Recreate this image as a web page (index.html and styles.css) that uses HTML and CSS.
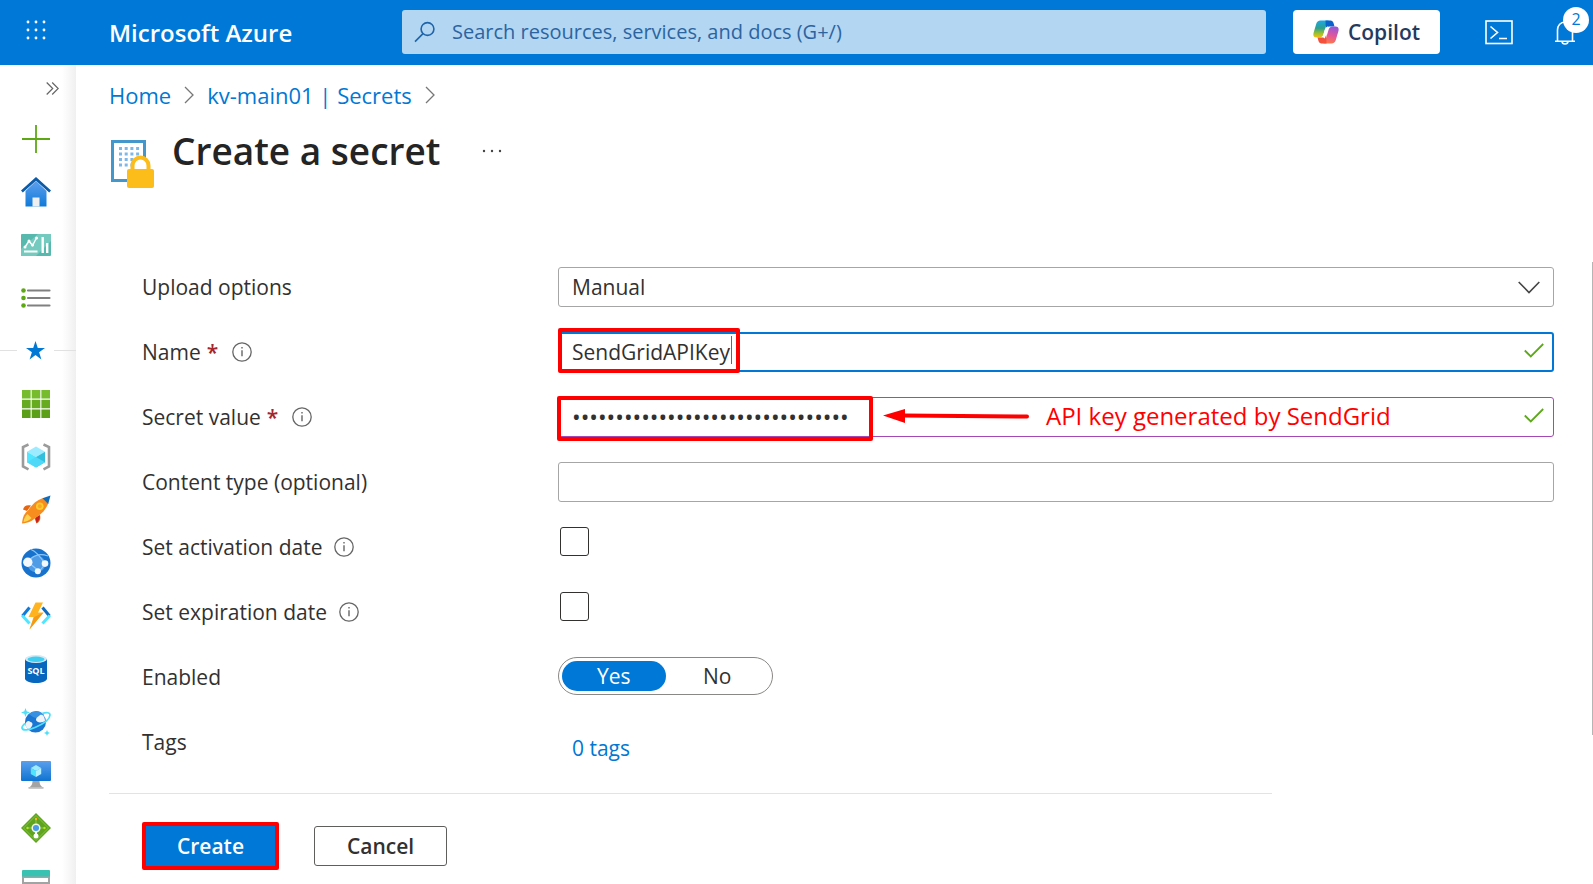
FILE: index.html
```html
<!DOCTYPE html>
<html lang="en">
<head>
  <meta charset="UTF-8">
  <meta name="viewport" content="width=device-width, initial-scale=1">
  <title>Create a secret - Microsoft Azure</title>
  <link rel="stylesheet" href="styles.css">
</head>
<body>
  <header class="topbar">
    <button class="waffle" aria-label="Portal menu">
      <svg width="20" height="20" viewBox="0 0 20 20" fill="#fff">
        <circle cx="2" cy="2" r="1.4"/><circle cx="10" cy="2" r="1.4"/><circle cx="18" cy="2" r="1.4"/>
        <circle cx="2" cy="10" r="1.4"/><circle cx="10" cy="10" r="1.4"/><circle cx="18" cy="10" r="1.4"/>
        <circle cx="2" cy="18" r="1.4"/><circle cx="10" cy="18" r="1.4"/><circle cx="18" cy="18" r="1.4"/>
      </svg>
    </button>
    <a class="brand" href="#">Microsoft Azure</a>
    <div class="search">
      <svg width="22" height="22" viewBox="0 0 22 22" fill="none" stroke="#1f64a8" stroke-width="1.6">
        <circle cx="13.5" cy="8" r="6.4"/><path d="M9 12.6L1 20.6"/>
      </svg>
      <input type="text" aria-label="Search" placeholder="Search resources, services, and docs (G+/)">
    </div>
    <button class="copilot">
      <svg width="26" height="24" viewBox="0 0 26 24">
        <defs>
          <linearGradient id="cpA" x1="0" y1="0" x2="0" y2="1">
            <stop offset="0" stop-color="#1aa7e8"/><stop offset=".45" stop-color="#2fa08c"/><stop offset=".75" stop-color="#9cc02c"/><stop offset="1" stop-color="#fbbf12"/>
          </linearGradient>
          <linearGradient id="cpB" x1=".5" y1="0" x2=".3" y2="1">
            <stop offset="0" stop-color="#9358d8"/><stop offset=".5" stop-color="#e0569b"/><stop offset="1" stop-color="#ff7a45"/>
          </linearGradient>
        </defs>
        <path d="M7.500 .5H16c-1.500.6-2 2-2.500 3.500L10.500 14c-.6 2.200-1.800 3.600-4 3.600H3.500C.8 17.600-.2 15.500.6 12.800L3.200 4C3.800 2 5.300.5 7.500.5z" fill="url(#cpA)"/>
        <path d="M12.500 .5h5c1.600 0 2.500 1 3 2.500l1 3.500h-5c-2 0-3 1-3.700 3z" fill="#0b62cc"/>
        <path d="M18.500 23.500H10c1.500-.6 2-2 2.500-3.500l3-10c.6-2.200 1.800-3.600 4-3.600h3c2.700 0 3.700 2.100 2.900 4.800L22.800 20c-.6 2-2.100 3.500-4.300 3.500z" fill="url(#cpB)"/>
        <path d="M13.500 23.500h-5c-1.600 0-2.500-1-3-2.500l-1-3.400h5c2 0 3-1 3.700-3z" fill="#f4513d"/>
        <path d="M15.300 7.500c-1.300.4-1.900 1.500-2.200 2.500l-1.800 6c-.2.700-.4 1.200-.7 1.600" fill="none" stroke="#fff" stroke-width="2.600"/>
      </svg>
      <span>Copilot</span>
    </button>
    <button class="shell" aria-label="Cloud Shell">
      <svg width="28" height="25" viewBox="0 0 28 25" fill="none" stroke="#fff" stroke-width="1.600">
        <rect x="1" y="1" width="26" height="22.500"/><path d="M5.500 6.500l7 6-7 6M14 18.500h8"/>
      </svg>
    </button>
    <button class="bell" aria-label="Notifications">
      <svg width="22" height="26" viewBox="0 0 22 26" fill="none" stroke="#fff" stroke-width="1.600">
        <path d="M1 21.200h20M3.500 21V10c0-4.500 3.200-8 7.500-8s7.500 3.500 7.500 8v11M8 21.500c.3 3.300 5.700 3.300 6 0"/>
      </svg>
      <span class="badge">2</span>
    </button>
  </header>

  <div class="layout">
    <nav class="sidebar" aria-label="Favorites">
      <button class="expand" aria-label="Expand menu">
        <svg width="13" height="13" viewBox="0 0 13 13" fill="none" stroke="#666" stroke-width="1.200"><path d="M.7.5l6 6-6 6M6.200.5l6 6-6 6"/></svg>
      </button>
      <a href="#" aria-label="Create a resource">
        <svg width="30" height="30" viewBox="0 0 30 30" stroke="#5ea816" stroke-width="1.800"><path d="M1 15h28M15 1v28"/></svg>
      </a>
      <a href="#" aria-label="Home">
        <svg width="30" height="30" viewBox="0 0 30 30">
          <defs><linearGradient id="hm" x1="0" y1="0" x2="0" y2="1"><stop offset="0" stop-color="#5ea0ef"/><stop offset="1" stop-color="#0f7ad8"/></linearGradient></defs>
          <path d="M4.500 14L15 4l10.500 10v15.500h-21z" fill="url(#hm)"/>
          <rect x="11.500" y="20.500" width="7" height="9" fill="#efefef"/>
          <path d="M15 0l15 13.500-1.800 2L15 3.800 1.800 15.500 0 13.500z" fill="#0b5ba8"/>
        </svg>
      </a>
      <a href="#" aria-label="Dashboard">
        <svg width="30" height="22" viewBox="0 0 30 22">
          <rect width="30" height="22" rx="1" fill="#57b9ae"/><path d="M0 15L17 0h12a1 1 0 0 1 1 1v6L15 22H0z" fill="#74cabf"/>
          <path d="M4 13l4-6 3.500 4.500L15.500 4" fill="none" stroke="#fff" stroke-width="1.400"/>
          <g fill="#fff"><circle cx="4" cy="13" r="1.500"/><circle cx="8" cy="7" r="1.500"/><circle cx="11.500" cy="11" r="1.500"/><circle cx="15.500" cy="4" r="1.500"/>
          <rect x="20.500" y="3" width="2.400" height="16"/><rect x="25" y="9" width="2.400" height="10"/><rect x="3" y="16.500" width="13.500" height="2"/></g>
        </svg>
      </a>
      <a href="#" aria-label="All services">
        <svg width="30" height="20" viewBox="0 0 30 20">
          <g fill="#5ea816"><circle cx="2.500" cy="2.500" r="2.300"/><circle cx="2.500" cy="10" r="2.300"/><circle cx="2.500" cy="17.500" r="2.300"/></g>
          <path d="M7 2.500h21.500M7 10h21.500M7 17.500h21.500" stroke="#808080" stroke-width="2.200" stroke-linecap="round"/>
        </svg>
      </a>
      <div class="favorites">
        <svg width="19" height="19" viewBox="0 0 19 19"><path d="M9.500 0l2.300 7H19l-5.900 4.300 2.300 7.200-5.900-4.400-5.900 4.400 2.300-7.200L0 7h7.200z" fill="#0078d4"/></svg>
      </div>
      <a href="#" aria-label="All resources">
        <svg width="28" height="28" viewBox="0 0 28 28">
          <path d="M0 0h8.600v8.600H0zM9.700 0h8.600v8.600H9.700zM19.400 0H28v8.600h-8.600z" fill="#76bc2d"/>
          <path d="M0 9.700h8.600v8.600H0zM9.700 9.700h8.600v8.600H9.700zM19.400 9.700H28v8.600h-8.600z" fill="#67ab20"/>
          <path d="M0 19.400h8.600V28H0zM9.700 19.400h8.600V28H9.700zM19.400 19.400H28V28h-8.600z" fill="#5a9f17"/>
        </svg>
      </a>
      <a href="#" aria-label="Resource groups">
        <svg width="30" height="28" viewBox="0 0 30 28">
          <path d="M7.500 1.500L2 4v19.500l5.500 2.800M22.500 1.500L28 4v19.500l-5.500 2.800" fill="none" stroke="#9b9b9b" stroke-width="2.600"/>
          <path d="M15 3.500l9 5.200L15 14 6 8.700z" fill="#9cebff"/><path d="M6 8.700L15 14v10.500l-9-5.300z" fill="#50e6ff"/><path d="M24 8.700L15 14v10.500l9-5.300z" fill="#32bedd"/><path d="M6 19.200L15 14l9 5.200-9 5.300z" fill="#50d8f8"/>
        </svg>
      </a>
      <a href="#" aria-label="Quickstart Center">
        <svg width="30" height="30" viewBox="0 0 30 30">
          <path d="M10 10.500c-4-1-7 0-8 4l4 1.500zM19 20c1 4 0 6.500-3.500 8.500l-2-5z" fill="#e8650d"/>
          <path d="M14.500 22.500l4-2.500c1 3-1 6.500-3 8z" fill="#c3201f"/>
          <path d="M8 15c-4.500 2.500-6.500 7-7 13.500C7.500 28 12 26 14.500 22z" fill="#f78d1e"/>
          <path d="M6.500 19c-2.500 2-3.500 5-4 8 3-.4 6-1.500 8-4z" fill="#ffd34e"/>
          <path d="M22 3c-7 2.500-12 7-16 14.500l6.500 6.500C20 20 25 14.500 27.500 8z" fill="#f78d1e"/>
          <path d="M29.500.5L21.500 3.300l5.700 5.600z" fill="#0f6cbd"/>
          <circle cx="18.800" cy="11.300" r="3.800" fill="#ffca2c"/><circle cx="18.800" cy="11.300" r="2" fill="#f9a825"/>
        </svg>
      </a>
      <a href="#" aria-label="App Services">
        <svg width="30" height="30" viewBox="0 0 30 30">
          <circle cx="15" cy="15" r="14.500" fill="#1672cc"/>
          <ellipse cx="15.500" cy="16" rx="9" ry="8.500" fill="#4e9be6"/>
          <path d="M10 1.500C14 3 19 8 24 16M7 14C12 7 19 5 27 8M7 14l12 10M24 16l-6 8" fill="none" stroke="#8fc6fa" stroke-width="1.200"/>
          <g fill="#f3f8fd"><circle cx="6.800" cy="14.300" r="4.700"/><circle cx="24" cy="15.600" r="3.300"/><circle cx="16.800" cy="23.200" r="3"/></g>
        </svg>
      </a>
      <a href="#" aria-label="Function App">
        <svg width="30" height="28" viewBox="0 0 30 28">
          <path d="M8.500 5.500L1.500 14" fill="none" stroke="#0f7ad8" stroke-width="3"/><path d="M1.200 13.500l7.300 8" fill="none" stroke="#50e6ff" stroke-width="3"/>
          <path d="M21.500 5.500l7 8.500" fill="none" stroke="#0f6cbd" stroke-width="3"/><path d="M28.800 13.500l-7.300 8" fill="none" stroke="#50e6ff" stroke-width="3"/>
          <path d="M14.500.5h7.500L17 10.500h5.500L8.500 27.500l4-12.500H7.500z" fill="#ffb41f"/><path d="M13.200 15l9.300-4.500L8.500 27.500z" fill="#f59a16"/>
        </svg>
      </a>
      <a href="#" aria-label="SQL databases">
        <svg width="22" height="28" viewBox="0 0 22 28">
          <path d="M0 4v19.500C0 26 5 28 11 28s11-2 11-4.500V4z" fill="#0766bd"/>
          <ellipse cx="11" cy="4" rx="11" ry="4" fill="#d5e8f4"/><ellipse cx="11" cy="4.300" rx="8.500" ry="2.700" fill="#3fcdf0"/>
          <text class="sql-text" x="11" y="19">SQL</text>
        </svg>
      </a>
      <a href="#" aria-label="Azure Cosmos DB">
        <svg width="30" height="28" viewBox="0 0 30 28">
          <circle cx="14.500" cy="14" r="10.500" fill="#1a76d2"/><path d="M8 6a10 10 0 0 1 15 1c-4 3-9 5-15-1z" fill="#3790e2"/>
          <path d="M4.500 16c1-3 3-4 5-2 2 .4 2.500 2 1.500 4l-3 4c-2-1-3.500-3.500-3.500-6zM15 12c0-3 3-3.500 4-5 3-1.500 5 2 5 6-2 1.500-8 2.500-9-1z" fill="#f0f4f8"/>
          <path d="M21 5.500c5-1.500 8-1 8 1.500 0 4-7 9-15 12.500C8 22 1.500 23 1 20c-.2-1 .8-2.700 3-4.700" fill="none" stroke="#50dff8" stroke-width="1.700"/>
          <path d="M4.500 0l1.200 3.300L9 4.500 5.700 5.700 4.500 9 3.300 5.700 0 4.500l3.300-1.200zM26 22l.9 2.100L29 25l-2.100.9L26 28l-.9-2.100L23 25l2.100-.9z" fill="#50dff8"/>
        </svg>
      </a>
      <a href="#" aria-label="Virtual machines">
        <svg width="30" height="28" viewBox="0 0 30 28">
          <defs><linearGradient id="vm" x1="0" y1="1" x2="0" y2="0"><stop offset="0" stop-color="#0f74d2"/><stop offset="1" stop-color="#5a9fec"/></linearGradient></defs>
          <rect width="30" height="20" rx="1" fill="url(#vm)"/><path d="M11.500 20h7c0 3.500 1 5 4 6.800H7.500c3-1.800 4-3.300 4-6.800z" fill="#a3a3a3"/><rect x="7.500" y="26" width="15" height="1.800" fill="#bdbdbd"/>
          <path d="M15 4l5.200 3L15 10 9.800 7z" fill="#9cebff"/><path d="M9.800 7L15 10v6l-5.200-3z" fill="#50e6ff"/><path d="M20.200 7L15 10v6l5.200-3z" fill="#b5f1ff"/>
        </svg>
      </a>
      <a href="#" aria-label="Load balancers">
        <svg width="30" height="30" viewBox="0 0 30 30">
          <path d="M15 0l15 15-15 15L0 15z" fill="#5fa321"/><path d="M15 2.500L27.500 15 15 27.500 2.500 15z" fill="none" stroke="#82c43c" stroke-width="1"/>
          <path d="M15 6v6M6 15h6M18 15h6" stroke="#86c543" stroke-width="1.200"/><path d="M15 18v5" stroke="#fff" stroke-width="2"/>
          <circle cx="15" cy="15" r="3.800" fill="#4a9bea" stroke="#eef7e4" stroke-width="1.500"/><circle cx="15" cy="23" r="2.500" fill="#fff"/>
          <circle cx="15" cy="6" r="1.200" fill="#ffb41f"/><circle cx="6.500" cy="15" r="1.200" fill="#b4e51f"/><circle cx="23.500" cy="15" r="1.200" fill="#b4e51f"/>
        </svg>
      </a>
      <a href="#" aria-label="Storage accounts">
        <svg width="28" height="22" viewBox="0 0 28 22">
          <path d="M0 6h28v15a1 1 0 0 1-1 1H1a1 1 0 0 1-1-1z" fill="#a3a3a3"/><path d="M0 1a1 1 0 0 1 1-1h26a1 1 0 0 1 1 1v5.500H0z" fill="#37c2b1"/><rect x="2" y="8" width="24" height="4" fill="#fff"/>
          <rect x="2" y="14" width="24" height="4" fill="#fff"/>
        </svg>
      </a>
    </nav>

    <main class="blade">
      <nav class="breadcrumb" aria-label="Breadcrumb">
        <a href="#">Home</a>
        <svg width="10" height="18" viewBox="0 0 10 18" fill="none" stroke="#777" stroke-width="1.300"><path d="M1 1l8 8-8 8"/></svg>
        <a href="#">kv-main01 | Secrets</a>
        <svg width="10" height="18" viewBox="0 0 10 18" fill="none" stroke="#777" stroke-width="1.300"><path d="M1 1l8 8-8 8"/></svg>
      </nav>

      <div class="title-row">
        <svg class="title-icon" width="43" height="48" viewBox="0 0 43 48">
          <rect x="1.500" y="1.500" width="32" height="39" fill="#fff" stroke="#4597cb" stroke-width="3"/>
          <path d="M8 8.500h21M8 14h21M8 19.500h21M8 25h14" stroke="#7db9e8" stroke-width="3" stroke-dasharray="3 2.700"/>
          <path d="M21.500 31v-5.500a8 8 0 0 1 16 0V31" fill="#fff" stroke="#fcbc19" stroke-width="4"/>
          <rect x="16" y="29" width="27" height="19" rx="2" fill="#fcbc19"/>
        </svg>
        <h1>Create a secret</h1>
        <button class="more" aria-label="More">
          <svg width="20" height="4" viewBox="0 0 20 4" fill="#444"><circle cx="2" cy="2" r="1.200"/><circle cx="10" cy="2" r="1.200"/><circle cx="18" cy="2" r="1.200"/></svg>
        </button>
      </div>

      <form class="secret-form">
        <div class="row">
          <label for="upload">Upload options</label>
          <div class="field">
            <select id="upload"><option>Manual</option></select>
            <svg class="field-icon chevron" width="22" height="13" viewBox="0 0 22 13" fill="none" stroke="#444" stroke-width="1.600"><path d="M.7 1L11 11.500 21.300 1"/></svg>
          </div>
        </div>

        <div class="row">
          <label for="name">Name <span class="required">*</span> <svg class="info" width="20" height="20" viewBox="0 0 20 20"><circle cx="10" cy="10" r="9.200" fill="none" stroke="#666" stroke-width="1.300"/><path d="M10 8.300v6M10 5v1.500" stroke="#666" stroke-width="1.400"/></svg></label>
          <div class="field">
            <input class="focused" type="text" id="name" value="SendGridAPIKey">
            <span class="highlight highlight-name"><span class="caret"></span></span>
            <svg class="field-icon" width="20" height="15" viewBox="0 0 20 15" fill="none" stroke="#5ea81c" stroke-width="1.800"><path d="M.8 7.500l6 6L19.200 1"/></svg>
          </div>
        </div>

        <div class="row">
          <label for="secret">Secret value <span class="required">*</span> <svg class="info" width="20" height="20" viewBox="0 0 20 20"><circle cx="10" cy="10" r="9.200" fill="none" stroke="#666" stroke-width="1.300"/><path d="M10 8.300v6M10 5v1.500" stroke="#666" stroke-width="1.400"/></svg></label>
          <div class="field">
            <input class="changed" type="password" id="secret" value="SG.0123456789abcdefghijklmnopqrs">
            <span class="highlight highlight-secret"></span>
            <div class="note">
              <svg width="146" height="14" viewBox="0 0 146 14"><path d="M0 6.500L22 0v14z" fill="#f00"/><path d="M20 6.500L144 7.500" stroke="#f00" stroke-width="4" stroke-linecap="round"/></svg>
              <span>API key generated by SendGrid</span>
            </div>
            <svg class="field-icon" width="20" height="15" viewBox="0 0 20 15" fill="none" stroke="#5ea81c" stroke-width="1.800"><path d="M.8 7.500l6 6L19.200 1"/></svg>
          </div>
        </div>

        <div class="row">
          <label for="content-type">Content type (optional)</label>
          <div class="field"><input type="text" id="content-type"></div>
        </div>

        <div class="row">
          <label for="activation">Set activation date <svg class="info" width="20" height="20" viewBox="0 0 20 20"><circle cx="10" cy="10" r="9.200" fill="none" stroke="#666" stroke-width="1.300"/><path d="M10 8.300v6M10 5v1.500" stroke="#666" stroke-width="1.400"/></svg></label>
          <div class="field"><input type="checkbox" id="activation"></div>
        </div>

        <div class="row">
          <label for="expiration">Set expiration date <svg class="info" width="20" height="20" viewBox="0 0 20 20"><circle cx="10" cy="10" r="9.200" fill="none" stroke="#666" stroke-width="1.300"/><path d="M10 8.300v6M10 5v1.500" stroke="#666" stroke-width="1.400"/></svg></label>
          <div class="field"><input type="checkbox" id="expiration"></div>
        </div>

        <div class="row">
          <span class="label" id="enabled-label">Enabled</span>
          <div class="field">
            <div class="toggle" role="radiogroup" aria-labelledby="enabled-label">
              <label><input type="radio" name="enabled" checked><span>Yes</span></label>
              <label><input type="radio" name="enabled"><span>No</span></label>
            </div>
          </div>
        </div>

        <div class="row">
          <span class="label">Tags</span>
          <div class="field"><a class="tags" href="#">0 tags</a></div>
        </div>

        <div class="actions">
          <button class="primary" type="button">Create</button>
          <button class="secondary" type="button">Cancel</button>
        </div>
      </form>
      <div class="scrollbar"></div>
    </main>
  </div>
</body>
</html>
```

FILE: styles.css
```css
* {
  box-sizing: border-box;
}
body {
  margin: 0;
  height: 100vh;
  overflow: hidden;
  display: flex;
  flex-direction: column;
  background: #fff;
  color: #323130;
  font-family: "Open Sans", "Noto Sans", sans-serif;
  font-size: 21px;
  line-height: 28px;
}
button, input, select {
  font: inherit;
  color: inherit;
}
button {
  padding: 0;
  border: 0;
  background: none;
}
a {
  color: #0078d4;
  text-decoration: none;
}
svg {
  display: block;
  flex: none;
}

/* top bar */
.topbar {
  display: flex;
  align-items: center;
  flex: none;
  height: 65px;
  background: #0078d7;
  color: #fff;
}
.waffle {
  width: 72px;
  height: 60px;
  padding-bottom: 6px;
  display: flex;
  align-items: center;
  justify-content: center;
}
.brand {
  width: 293px;
  margin-left: 37px;
  color: #fff;
  font-size: 24px;
  font-weight: 600;
}
.search {
  flex: 1;
  display: flex;
  align-items: center;
  gap: 16px;
  height: 44px;
  margin-bottom: 2px;
  padding: 0 12px;
  border-radius: 3px;
  background: #b3d6f2;
}
.search input {
  flex: 1;
  min-width: 0;
  padding: 0;
  border: 0;
  outline: 0;
  background: none;
  font-size: 20px;
}
.search input::placeholder {
  color: #2c64a0;
  opacity: 1;
}
.copilot {
  display: flex;
  align-items: center;
  justify-content: center;
  gap: 9px;
  width: 147px;
  height: 44px;
  margin: 0 45px 2px 27px;
  border-radius: 4px;
  background: #fff;
  color: #243a5e;
  font-weight: 600;
}
.bell {
  position: relative;
  margin: 0 17px 0 41px;
}
.badge {
  position: absolute;
  top: -13px;
  left: 9px;
  width: 26px;
  height: 26px;
  border-radius: 50%;
  background: #fff;
  color: #0078d7;
  font-size: 16px;
  line-height: 25px;
  text-align: center;
}

/* sidebar */
.layout {
  display: flex;
  flex: 1;
  min-height: 0;
}
.sidebar {
  flex: none;
  width: 76px;
  overflow: hidden;
  background: linear-gradient(to right, #fff 62px, #f0f0f0 76px);
}
.sidebar a, .favorites {
  display: flex;
  align-items: center;
  justify-content: center;
  width: 71px;
  height: 53px;
}
.expand {
  display: flex;
  align-items: center;
  justify-content: flex-end;
  width: 59px;
  height: 47px;
}
.sidebar .favorites {
  gap: 9px;
  width: 76px;
}
.favorites::before, .favorites::after {
  content: "";
  flex: 0 0 17px;
  height: 1px;
  background: #e1e1e1;
}
.favorites::after {
  flex: 1;
}
.sql-text {
  fill: #fff;
  font-size: 9px;
  font-weight: 700;
  text-anchor: middle;
}

/* blade */
.blade {
  position: relative;
  flex: 1;
  min-width: 0;
  padding-left: 33px;
}
.breadcrumb {
  display: flex;
  align-items: center;
  gap: 13px;
  padding-top: 16px;
  font-size: 22px;
}
.title-row {
  display: flex;
  align-items: flex-start;
  gap: 18px;
  padding: 16px 0 0 2px;
}
.title-icon {
  margin-top: 15px;
}
h1 {
  margin: 0;
  color: #242424;
  font-size: 37px;
  font-weight: 600;
  line-height: 52px;
}
.more {
  margin: 24px 0 0 24px;
}

/* form */
.secret-form {
  margin-top: 79px;
}
.row {
  display: grid;
  grid-template-columns: 416px 1fr;
  height: 65px;
  margin: 0 39px 0 33px;
}
.row > label, .label {
  display: flex;
  align-items: center;
  height: 40px;
}
.required {
  margin-left: 6px;
  color: #a4262c;
  font-weight: 600;
}
.info {
  margin-left: 12px;
}
.required + .info {
  margin-left: 14px;
}
.field {
  position: relative;
}
.field select,
.field input[type="text"],
.field input[type="password"] {
  display: block;
  width: 100%;
  height: 40px;
  padding: 0 13px;
  border: 1px solid #a6a6a6;
  border-radius: 3px;
  outline: 0;
  background: #fff;
  appearance: none;
}
.field .focused[type="text"] {
  padding: 0 12px;
  border: 2px solid #0078d4;
}
.field .changed[type="password"] {
  border-color: #a348b5;
  font-size: 23px;
}
.field-icon {
  position: absolute;
  top: 11px;
  right: 10px;
}
.chevron {
  top: 14px;
  right: 14px;
}
.field input[type="checkbox"] {
  display: block;
  width: 29px;
  height: 29px;
  margin: 0 0 0 2px;
  border: 1px solid #323130;
  border-radius: 3px;
  background: #fff;
  appearance: none;
}

/* red call-outs over the fields */
.highlight {
  position: absolute;
  top: -4px;
  left: 0;
  height: 45px;
  border: 4px solid #f00;
  border-radius: 2px;
  pointer-events: none;
}
.highlight-name {
  width: 182px;
}
.highlight-secret {
  left: -1px;
  top: -1px;
  width: 316px;
}
.caret {
  position: absolute;
  top: 4px;
  right: 4px;
  width: 1px;
  height: 28px;
  background: #666;
}
.note {
  position: absolute;
  top: 0;
  left: 325px;
  display: flex;
  align-items: center;
  gap: 17px;
  height: 38px;
  color: #f00;
  font-size: 24px;
  white-space: nowrap;
}

.toggle {
  display: flex;
  width: 215px;
  height: 38px;
  padding: 3px;
  border: 1px solid #8a8886;
  border-radius: 19px;
}
.toggle label {
  flex: 1;
}
.toggle input {
  position: absolute;
  opacity: 0;
}
.toggle span {
  display: block;
  border-radius: 15px;
  line-height: 30px;
  text-align: center;
}
.toggle input:checked + span {
  background: #0078d7;
  color: #fff;
}
.tags {
  display: block;
  padding: 12px 14px;
}

.actions {
  display: flex;
  gap: 35px;
  width: calc(100% - 321px);
  padding: 28px 0 0 33px;
  margin-top: 6px;
  border-top: 1px solid #e3e3e3;
}
.actions button {
  font-weight: 600;
}
.primary {
  width: 137px;
  height: 48px;
  border: 4px solid #f00;
  border-radius: 2px;
  background: #0078d7;
  color: #fff;
}
.secondary {
  width: 133px;
  height: 40px;
  margin-top: 4px;
  border: 1px solid #605e5c;
  border-radius: 3px;
}

/* edge of the page scrollbar */
.scrollbar {
  position: absolute;
  top: 197px;
  right: 0;
  width: 1px;
  height: 473px;
  background: #b5b5b5;
}
```
